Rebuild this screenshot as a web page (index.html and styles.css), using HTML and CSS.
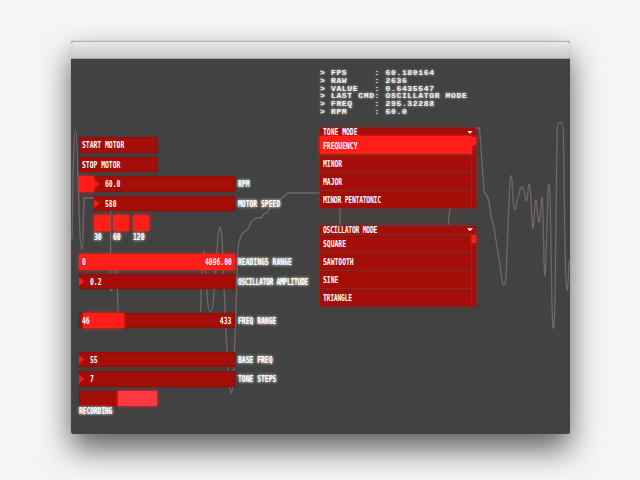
FILE: index.html
```html
<!DOCTYPE html>
<html lang="en">
<head>
<meta charset="utf-8">
<title>Motor control</title>
<link rel="stylesheet" href="styles.css">
</head>
<body>
<main class="window">
  <header class="titlebar"></header>
  <div class="content">
    <svg class="wave" viewBox="71 59 499 374" aria-hidden="true">
      <path d="M72 240L73 180Q74 130 75.500 130T78 180L80 235Q81 249 82 249T83 235L84 198H110.500V273L111 289M110.500 273V289Q111 293 112 289M114 270V289M117 270L118 312M200.500 312L202 270Q203 251 204 251T205.500 275L208 305Q210.500 320 213 305L218 235Q220 218 222 238L226 335L229 380Q231 402 233 386L235 335L238 250Q239 237 243 233L248 229L251 222L256 218H261L264 214L268 212L271 204L276 203L288 193H340V226M340 226V236M450 208L448 226"/>
      <path d="M476 128H479.500L481 148L484 191Q485 195 487 195L489 202L491 216L494 228L500 265L502 281Q503 287 505 284L506 278L508 225L510 180Q511 171 512 181L513 199Q515 219 517 201L520 190Q522 183 524 191L526 200Q527 204 528 190Q529.500 174 531 200L532 220Q533 238 534 218L535 205Q536 194 537 207L538 219Q539.500 230 541 207Q542 184 543 216L544 260Q545 293 546 257L548 190Q549 176 550 195L552 307Q553.500 353 555 300L557 140Q557 123 559 123H562Q563.500 123 563.500 140L565 250Q567 325 569 260"/>
    </svg>
    <section class="controls">
      <div class="row"><div class="bar button"><span class="txt">START MOTOR</span></div></div>
      <div class="row"><div class="bar button"><span class="txt">STOP MOTOR</span></div></div>
      <div class="row"><div class="bar"><i class="fill rpm"></i><i class="arrow"></i><span class="txt value">60.0</span></div><span class="txt label">RPM</span></div>
      <div class="row inset"><div class="bar"><i class="arrow"></i><span class="txt value">580</span></div><span class="txt label">MOTOR SPEED</span></div>
      <div class="row inset toggles"><i class="toggle"></i><i class="toggle"></i><i class="toggle"></i></div>
      <div class="row inset toggle-labels"><span class="txt label">30</span><span class="txt label">60</span><span class="txt label">120</span></div>
      <div class="row"><div class="bar full"><span class="txt">0</span><span class="txt end">4096.00</span></div><span class="txt label">READINGS RANGE</span></div>
      <div class="row"><div class="bar"><i class="arrow"></i><span class="txt value">0.2</span></div><span class="txt label tighter">OSCILLATOR AMPLITUDE</span></div>
      <div class="row after-gap"><div class="bar"><i class="fill range"></i><span class="txt over">46</span><span class="txt end">433</span></div><span class="txt label">FREQ RANGE</span></div>
      <div class="row after-gap"><div class="bar"><i class="arrow"></i><span class="txt value">55</span></div><span class="txt label">BASE FREQ</span></div>
      <div class="row"><div class="bar"><i class="arrow"></i><span class="txt value">7</span></div><span class="txt label">TONE STEPS</span></div>
      <div class="row"><div class="bar button"><i class="switch"></i></div></div>
      <span class="txt label recording">RECORDING</span>
    </section>
    <section class="panel">
<pre class="console">&gt; FPS     : 60.180164
&gt; RAW     : 2636
&gt; VALUE   : 0.6435547
&gt; LAST CMD: OSCILLATOR MODE
&gt; FREQ    : 295.32288
&gt; RPM     : 60.0</pre>
      <div class="dropdown">
        <div class="head"><span class="txt">TONE MODE</span><i class="caret"></i></div>
        <div class="list">
          <ul><li class="active"><span class="txt">FREQUENCY</span></li><li><span class="txt">MINOR</span></li><li><span class="txt">MAJOR</span></li><li><span class="txt tight">MINOR PENTATONIC</span></li></ul>
          <div class="scroll"><i></i></div>
        </div>
      </div>
      <div class="dropdown">
        <div class="head"><span class="txt tight">OSCILLATOR MODE</span><i class="caret"></i></div>
        <div class="list">
          <ul><li><span class="txt">SQUARE</span></li><li><span class="txt">SAWTOOTH</span></li><li><span class="txt">SINE</span></li><li><span class="txt tight">TRIANGLE</span></li></ul>
          <div class="scroll"><i></i></div>
        </div>
      </div>
    </section>
  </div>
</main>
</body>
</html>
```
FILE: styles.css
```css
* { box-sizing: border-box; }
body {
  margin: 0;
  height: 480px;
  padding: 41px 70px 0 71px;
  overflow: hidden;
  background: #f5f5f5;
  color: #fff;
  font: bold 8.5px/8px "DejaVu Sans Mono", monospace;
  white-space: nowrap;
}
.window {
  width: 499px;
  height: 393px;
  border-radius: 3px;
  background: #424242;
  box-shadow: 0 0 1px #777, 0 15px 31px rgba(0, 0, 0, 0.62);
}
.titlebar {
  height: 18px;
  border-radius: 3px 3px 0 0;
  border-top: 1px solid #b5b5b5;
  border-bottom: 1px solid #a5a8a5;
  background: linear-gradient(#e9e9e9, #c8c8c8);
}
.content { position: relative; display: flex; height: 375px; }
.wave {
  position: absolute;
  inset: 0;
  width: 499px;
  height: 374px;
  fill: none;
  stroke: #71676a;
  stroke-width: 1.3;
}
/* Condensed display lettering */
.txt {
  display: inline-block;
  transform: scaleX(0.75);
  transform-origin: left center;
}
.controls { position: relative; width: 241px; padding: 78.300px 0 0 7.500px; }
.row {
  display: flex;
  align-items: center;
  height: 15.5px;
  margin-bottom: 4px;
}
.row.inset { padding-left: 15px; }
.row.after-gap { margin-top: 23.5px; }
.bar {
  position: relative;
  display: flex;
  flex: none;
  align-items: center;
  width: 156px;
  height: 15.5px;
  padding: 0 3px;
  background: #a30e08;
  box-shadow: inset 0 0 2px #760b07, 0 0 2px rgba(120, 25, 20, 0.5);
}
.inset .bar { width: 141px; }
.bar.button { width: 78px; }
.bar.full { background: #ff1e18; box-shadow: 0 0 4px #e52620; }
.fill {
  position: absolute;
  left: 0;
  top: 0;
  height: 100%;
  background: #ff1e18;
  box-shadow: 0 0 4px #f02520;
}
.fill.rpm { width: 15px; }
.fill.range { left: 4px; width: 41px; }
.arrow {
  width: 6px;
  height: 10px;
  margin-left: -3px;
  background: #fa1b15;
  clip-path: polygon(0 0, 100% 50%, 0 100%);
}
.rpm + .arrow { margin-left: 12px; }
.value { margin-left: 5px; }
.over { position: relative; }
.end { margin-left: auto; transform-origin: right center; }
.label {
  margin-left: 3px;
  text-shadow: 0 0 3px rgba(255, 255, 255, 0.8), 0 0 4px rgba(255, 255, 255, 0.6);
}
.tight { letter-spacing: -0.300px; }
.tighter { letter-spacing: -0.450px; }
.toggles { gap: 3.500px; }
.toggle {
  width: 16px;
  height: 15.5px;
  background: #ff1e18;
  box-shadow: 0 0 4px #e52620;
}
.toggle-labels { height: 8px; margin: -2px 0 13.500px; }
.toggle-labels .label { width: 19.5px; margin: 0; }
.switch {
  position: absolute;
  right: 0;
  top: 0;
  width: 39px;
  height: 100%;
  background: #ff3843;
  box-shadow: 0 0 4px #ff2a25;
}
.recording { display: block; margin: -3px 0 0; letter-spacing: -0.200px; }
.panel { position: relative; width: 157px; margin-left: 8px; padding-top: 10px; }
.console {
  margin: 0 0 12.5px;
  font: bold 8px/7.8px "Liberation Mono", monospace;
  letter-spacing: 0.66px;
  color: #f0f0f0;
  text-shadow: 0 0 2px #aaa, 0 0 3px #999;
}
.dropdown {
  width: 156px;
  margin-bottom: 17.5px;
  background: #a30e08;
  box-shadow: 0 0 4px #a51b16;
}
.head {
  display: flex;
  justify-content: space-between;
  align-items: center;
  height: 8px;
  padding: 0 3px;
}
.caret {
  width: 6px;
  height: 3px;
  background: #fff;
  clip-path: polygon(0 0, 100% 0, 50% 100%);
}
.list { display: flex; height: 72px; }
ul { width: 152px; margin: 0; padding: 0; list-style: none; }
li {
  height: 18px;
  padding: 5px 3px 0;
  border-top: 1px solid #79302c;
  border-right: 1px solid #79302c;
}
li.active { background: #ff1e18; border-color: #ff1e18; box-shadow: 0 0 4px #ff2520; }
.scroll { width: 4px; padding-top: 1px; }
.scroll i { display: block; height: 8px; background: #ff1e18; box-shadow: 0 0 4px #f02520; }
```
